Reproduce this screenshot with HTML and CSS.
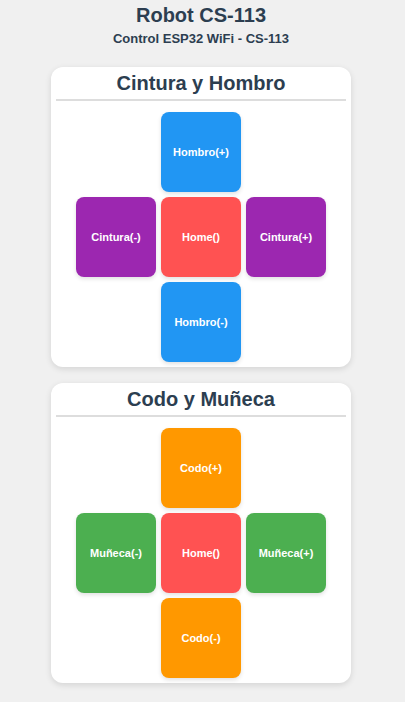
FILE: index.html
```
<!DOCTYPE html>
<html lang="es">
<head>
  <meta charset="UTF-8" />
  <meta name="viewport" content="width=device-width, initial-scale=1.0" />
  <title>Robot CS-113</title>
  <link rel="stylesheet" href="styles.css">
</head>
<body>
  <h1>Robot CS-113</h1>
  <p class="subtitle">Control ESP32 WiFi - CS-113</p>

  <div class="card">
    <h2>Cintura y Hombro</h2>
    <div class="pad">
      <button class="btn blue top">Hombro(+)</button>
      <button class="btn purple mid">Cintura(-)</button>
      <button class="btn red mid">Home()</button>
      <button class="btn purple mid">Cintura(+)</button>
      <button class="btn blue bottom">Hombro(-)</button>
    </div>
  </div>

  <div class="card">
    <h2>Codo y Muñeca</h2>
    <div class="pad">
      <button class="btn orange top">Codo(+)</button>
      <button class="btn green mid">Muñeca(-)</button>
      <button class="btn red mid">Home()</button>
      <button class="btn green mid">Muñeca(+)</button>
      <button class="btn orange bottom">Codo(-)</button>
    </div>
  </div>
</body>
</html>
```
FILE: styles.css
```
body {
  font-family: "Liberation Sans", Arial, sans-serif;
  background-color: #f0f0f0;
  color: #2c3e50;
  margin: 0;
  padding: 4px 3px 0 0;
}
h1 {
  text-align: center;
  font-size: 20px;
  margin: 0;
  line-height: 23px;
}
.subtitle {
  text-align: center;
  font-size: 13px;
  font-weight: bold;
  margin: 4px 0 21px;
  line-height: 15px;
}
.card {
  width: 300px;
  margin: 0 auto 16px;
  background: white;
  border-radius: 12px;
  padding: 5px 5px 5px;
  box-sizing: border-box;
  box-shadow: 0 2px 6px rgba(0,0,0,0.12);
}
h2 {
  text-align: center;
  font-size: 20px;
  line-height: 23px;
  margin: 0 0 11px;
  padding-bottom: 4px;
  border-bottom: 2px solid #ddd;
}
.pad {
  display: grid;
  grid-template-columns: repeat(3, 80px);
  grid-auto-rows: 80px;
  gap: 5px;
  justify-content: center;
}
.btn {
  border: none;
  border-radius: 8px;
  color: white;
  font-family: "Liberation Sans", Arial, sans-serif;
  font-size: 11px;
  font-weight: bold;
  cursor: pointer;
  padding: 0;
  box-shadow: 0 2px 4px rgba(0,0,0,0.12);
}
.top {
  grid-row: 1;
  grid-column: 2;
}
.mid {
  grid-row: 2;
}
.bottom {
  grid-row: 3;
  grid-column: 2;
}
.blue { background-color: #2196f3; }
.purple { background-color: #9c27b0; }
.red { background-color: #ff5252; }
.green { background-color: #4caf50; }
.orange { background-color: #ff9800; }
```
